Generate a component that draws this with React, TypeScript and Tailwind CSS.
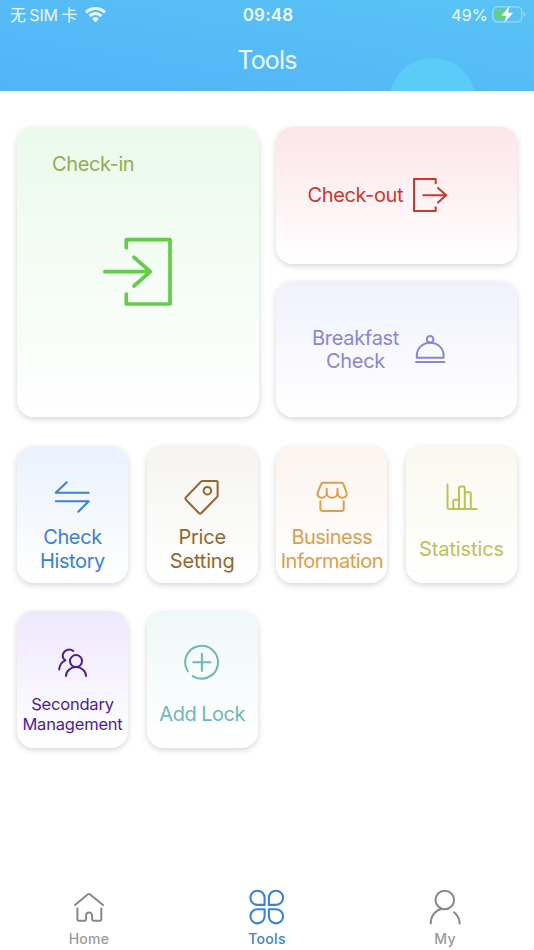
import { ReactNode } from 'react';

type TIconProps = {
  children: ReactNode;
  className?: string;
  viewBox?: string;
  strokeWidth?: number;
};

function Icon({
  children,
  className = 'size-9',
  viewBox = '0 0 36 36',
  strokeWidth = 2,
}: TIconProps) {
  return (
    <svg
      className={`shrink-0 ${className}`}
      viewBox={viewBox}
      fill="none"
      stroke="currentColor"
      strokeWidth={strokeWidth}
      strokeLinecap="round"
      strokeLinejoin="round"
    >
      {children}
    </svg>
  );
}

const CARD = 'rounded-[17px] bg-linear-to-b shadow-[0_2px_6px_rgba(0,0,0,0.17)]';

const TOOLS = [
  {
    lines: ['Check', 'History'],
    card: 'from-[#e9f2fe] to-white text-[#3c80d5]',
    text: 'text-[20px] leading-[23.5px] tracking-[-0.4px]',
    icon: (
      <Icon>
        <path d="M34.7 13.7H1.7L12.7 3.3M1.7 22.3h33L24.3 32.7" />
      </Icon>
    ),
  },
  {
    lines: ['Price', 'Setting'],
    card: 'from-[#f5f4f0] to-white text-[#94652f]',
    text: 'text-[20px] leading-[23.5px] tracking-[-0.2px]',
    icon: (
      <Icon>
        <path d="M18.7 1.9H32.4a1.2 1.2 0 0 1 1.2 1.2V16.4a2.5 2.5 0 0 1-.8 1.9L17.4 34a1.8 1.8 0 0 1-2.6 0L2 20.8a1.8 1.8 0 0 1 0-2.5L17 2.6a2.5 2.5 0 0 1 1.7-.7Z" />
        <circle cx="23.4" cy="11.7" r="3.8" />
      </Icon>
    ),
  },
  {
    lines: ['Business', 'Information'],
    card: 'from-[#fdf4ee] to-white text-[#d9a050]',
    text: 'text-[20px] leading-[23.5px] tracking-[-0.5px]',
    icon: (
      <Icon>
        <path d="M9 3.7h18.6a1.8 1.8 0 0 1 1.7 1.2l3.2 8.6c1 2.8-1.1 5.2-4 5.2-2.8 0-5-2-5-4.8V9.7" />
        <path d="M23.5 13.9c0 2.8-2.4 4.8-5.4 4.8s-5.4-2-5.4-4.8V9.7" />
        <path d="M12.7 13.9c0 2.8-2.2 4.8-5 4.8-2.9 0-5-2.4-4-5.2L7.2 4.9A1.9 1.9 0 0 1 9 3.7" />
        <path d="M6.4 22.2v7.6a2.3 2.3 0 0 0 2.3 2.3h18.7a2.3 2.3 0 0 0 2.3-2.3v-7.6" />
      </Icon>
    ),
  },
  {
    lines: ['Statistics'],
    card: 'from-[#f9f9ee] to-white text-[#b9c35a]',
    text: 'text-[20px] leading-[23.5px] tracking-[-0.1px]',
    icon: (
      <Icon>
        <path d="M3.5 5.5V28a2 2 0 0 0 2 2H32.7" />
        <path d="M9.3 30V22a1.3 1.3 0 0 1 1.3-1.3H15" />
        <path d="M15 30V9a1.5 1.5 0 0 1 1.5-1.5h2.8A1.5 1.5 0 0 1 20.8 9V30" />
        <path d="M20.8 13.2h4.5a1.5 1.5 0 0 1 1.5 1.5V30" />
      </Icon>
    ),
  },
  {
    lines: ['Secondary', 'Management'],
    card: 'from-[#eee8fd] to-white text-[#4b1f97]',
    text: 'text-[16.5px] leading-[19.5px] tracking-[-0.2px]',
    icon: (
      <Icon>
        <circle cx="22" cy="17.1" r="6" />
        <path d="M12 32a10 9 0 0 1 20 0" />
        <path d="M19.3 7A6.6 6.6 0 0 0 8.7 11.5c0 2 1 3.8 2.7 4.9-3.5 1.5-5.8 4.9-6.2 9" />
      </Icon>
    ),
  },
  {
    lines: ['Add Lock'],
    card: 'from-[#eff8f8] to-white text-[#6fb8b5]',
    text: 'text-[20px] leading-[23.5px] tracking-[-0.5px]',
    icon: (
      <Icon>
        <path d="M3.9 27.3A16.4 16.4 0 1 1 8.8 32.1M9.3 18.3h17.2M17.9 9.7v17.2" />
      </Icon>
    ),
  },
];

const TABS = [
  {
    label: 'Home',
    className: 'text-[#9a9a9a]',
    icon: (
      <Icon className="size-9 text-[#888888]">
        <path d="M4 16 16.6 5.5a2 2 0 0 1 2.6 0L32 16" />
        <path d="M6.4 19.5v10.7a1.5 1.5 0 0 0 1.5 1.5h5.7a1.5 1.5 0 0 0 1.5-1.5V26.5a3 3 0 0 1 6 0v3.7a1.5 1.5 0 0 0 1.5 1.5h6.2a1.5 1.5 0 0 0 1.5-1.5V19.5" />
      </Icon>
    ),
  },
  {
    label: 'Tools',
    className: 'text-[#3c82d4]',
    icon: (
      <Icon strokeWidth={2.1}>
        <path d="M8.5 1.7a7.1 7.1 0 0 1 7.1 7.1V15.9H8.5a7.1 7.1 0 0 1 0-14.2Z" />
        <path d="M27 1.7a7.1 7.1 0 0 1 0 14.2H19.9V8.8a7.1 7.1 0 0 1 7.1-7.1Z" />
        <path d="M8.5 20.2H15.6v7.1a7.1 7.1 0 1 1-7.1-7.1Z" />
        <path d="M19.9 20.2h7.1a7.1 7.1 0 1 1-7.1 7.1Z" />
      </Icon>
    ),
  },
  {
    label: 'My',
    className: 'text-[#9a9a9a]',
    icon: (
      <Icon className="size-9 text-[#888888]">
        <circle cx="17.8" cy="11" r="9.3" />
        <path d="M3.7 34.5C3.7 27.3 8 21.7 14.2 20M27.1 23.3c3.2 2.7 5.4 6.5 5.6 11.2" />
      </Icon>
    ),
  },
];

function StatusBar() {
  return (
    <div className="grid h-[29px] grid-cols-3 items-center pr-[8px] pl-[10px]">
      <div className="flex items-center gap-[8px]">
        <span className="flex gap-[3.5px] text-[16px] tracking-[-0.2px]">
          <span>无</span>
          <span>SIM</span>
          <span>卡</span>
        </span>
        <svg className="h-[16px] w-[21px]" viewBox="0 0 21 16" fill="currentColor">
          <path d="M10.5 0C6.5 0 2.9 1.5.3 4a.5.5 0 0 0 0 .8l1.4 1.4c.2.2.5.2.7 0a11.7 11.7 0 0 1 16.2 0c.2.2.5.2.7 0l1.4-1.4a.5.5 0 0 0 0-.8C18.1 1.5 14.5 0 10.5 0Z" />
          <path d="M10.5 5.1c-2.6 0-4.9 1-6.6 2.6a.5.5 0 0 0 0 .7l1.4 1.4c.2.2.5.2.7 0a6.5 6.5 0 0 1 9 0c.2.2.5.2.7 0l1.4-1.4a.5.5 0 0 0 0-.7 9.6 9.6 0 0 0-6.6-2.6Z" />
          <path d="M10.5 10.2c-1.2 0-2.3.5-3.1 1.2a.5.5 0 0 0 0 .7l2.7 2.9c.2.2.5.2.7 0l2.8-2.9a.5.5 0 0 0 0-.7 4.5 4.5 0 0 0-3.1-1.2Z" />
        </svg>
      </div>
      <span className="pt-[2px] text-center text-[17px] font-semibold tracking-[0.2px]">09:48</span>
      <div className="flex items-center justify-end gap-[4px]">
        <span className="pt-[2px] text-[16.5px]">49%</span>
        <svg className="h-[20px] w-[34px]" viewBox="0 0 34 20" fill="none">
          <rect x=".8" y="1.8" width="29" height="15" rx="4.5" stroke="#a0daf8" strokeWidth="1.3" />
          <path d="M5 3.8h8v11H5a2.3 2.3 0 0 1-2.3-2.3V6.1A2.3 2.3 0 0 1 5 3.8Z" fill="#66d080" />
          <path d="M31.8 6.8c1.7.7 1.7 4.3 0 5Z" fill="#a0daf8" />
          <path d="M17.5 1 9.5 10.7h5L12.2 17.8l9-10h-5.2Z" fill="white" />
        </svg>
      </div>
    </div>
  );
}

export default function App() {
  return (
    <div className="flex h-[950px] w-[534px] flex-col bg-white font-['Inter','Noto_Sans_CJK_SC',sans-serif]">
      <header className="relative h-[91px] overflow-hidden bg-linear-to-tr from-[#52b4f7] to-[#59c3f5] text-[#eefaff]">
        <div className="absolute top-[58px] left-[389px] size-[87px] rounded-full bg-[#5bcbf8]" />
        <div className="relative">
          <StatusBar />
          <h1 className="pt-[13px] text-center text-[25px] leading-[36px] tracking-[-0.8px]">
            Tools
          </h1>
        </div>
      </header>

      <main className="flex-1 px-[17px] pt-[36px]">
        <div className="grid h-[290px] grid-cols-2 grid-rows-2 gap-[17px] text-[20px] leading-[23.5px] tracking-[-0.4px]">
          <div className={`${CARD} row-span-2 from-[#eafaeb] to-white`}>
            <p className="pt-[26px] pl-[35px] text-[#91ae50]">Check-in</p>
            <Icon
              className="mt-[60.5px] ml-[86px] size-[70px] text-[#65cc4b]"
              viewBox="0 0 70 70"
              strokeWidth={3.7}
            >
              <path d="M23.3 10.7V2.7H67v64.3H23.3V57M1.9 34.7H47.3M31 20.3 47.3 34.7 31 49" />
            </Icon>
          </div>
          <div className={`${CARD} flex items-center gap-[9px] from-[#fce5e8] to-white pl-[32px] text-[#cc382f]`}>
            <p>Check-out</p>
            <Icon>
              <path d="M23.7 6.3V2H2v32H23.7V30.3M11.3 18.3H34M26 11l8.2 7.3-8.2 7.3" />
            </Icon>
          </div>
          <div className={`${CARD} flex items-center gap-[15px] from-[#f1f1fd] to-white pl-[36.5px] text-[#8986d2]`}>
            <p className="pt-[3px] text-center tracking-[-0.3px]">
              Breakfast
              <br />
              Check
            </p>
            <Icon className="h-[30px] w-[32px]" viewBox="0 0 32 30">
              <circle cx="16.1" cy="5.2" r="3.3" />
              <path d="M2.8 23.7V21.5C2.8 14.3 8.7 8.7 16.2 8.7s13.4 5.6 13.4 12.8v2.2Z" />
              <path d="M2 27.9H30.4" />
            </Icon>
          </div>
        </div>

        <div className="mt-[29px] grid grid-cols-4 gap-x-[18.7px] gap-y-[28.5px]">
          {TOOLS.map(tool => (
            <div
              key={tool.lines.join(' ')}
              className={`${CARD} flex h-[136.5px] flex-col items-center pt-[33px] ${tool.card}`}
            >
              {tool.icon}
              <p className={`flex flex-1 flex-col justify-center pt-[2px] text-center whitespace-nowrap ${tool.text}`}>
                {tool.lines.map(line => (
                  <span key={line}>{line}</span>
                ))}
              </p>
            </div>
          ))}
        </div>
      </main>

      <nav className="grid h-[61px] grid-cols-3 text-[14px] leading-[18px] font-medium tracking-[0.3px]">
        {TABS.map(tab => (
          <div key={tab.label} className={`flex flex-col items-center gap-[5px] ${tab.className}`}>
            {tab.icon}
            {tab.label}
          </div>
        ))}
      </nav>
    </div>
  );
}
